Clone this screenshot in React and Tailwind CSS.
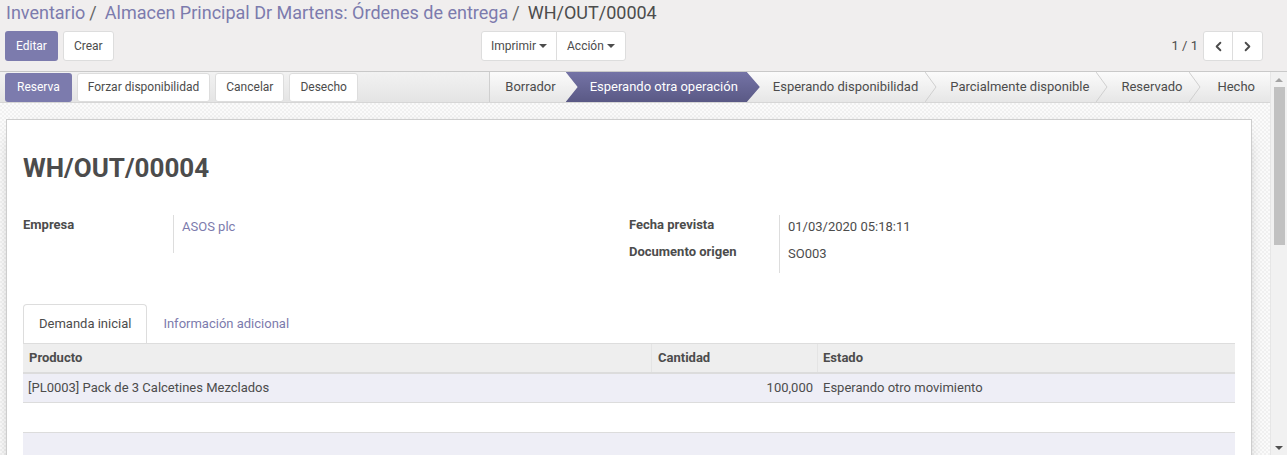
import React from "react";
import { ChevronLeft, ChevronRight } from "lucide-react";

const Caret = () => (
  <span className="inline-block ml-[3px] align-middle border-t-[4px] border-t-[#4c4c4c] border-x-[4px] border-x-transparent" />
);

const Chevron = () => (
  <svg width="12" height="30" viewBox="0 0 12 30" className="shrink-0">
    <polyline points="0,0 11,15 0,30" fill="none" stroke="#cfcfcf" strokeWidth="1" />
  </svg>
);

const steps = [
  "Esperando disponibilidad",
  "Parcialmente disponible",
  "Reservado",
];

const StatusBar = () => (
  <div className="flex h-full border-l border-[#cfcfcf] bg-[linear-gradient(to_bottom,#fbfbfb,#e6e6e6)]">
    <div className="flex items-center pl-[15px] pr-[10px]">Borrador</div>
    <div className="flex items-center pl-[24px] pr-[22px] text-white bg-[linear-gradient(to_bottom,#7473a6,#5a5985)] [clip-path:polygon(0_0,calc(100%_-_13px)_0,100%_50%,calc(100%_-_13px)_100%,0_100%,12px_50%)]">
      Esperando otra operación
    </div>
    {steps.map((s) => (
      <React.Fragment key={s}>
        <div className="flex items-center pl-[13px] pr-[7px]">{s}</div>
        <Chevron />
      </React.Fragment>
    ))}
    <div className="flex items-center pl-[16px] pr-[15px]">Hecho</div>
  </div>
);

export default function App() {
  return (
    <div className="w-[1287px] h-[455px] overflow-hidden flex flex-col text-[13px] text-[#4c4c4c] font-['Roboto',sans-serif] bg-[#f0eeee]">
      {/* control panel */}
      <div className="h-[72px] shrink-0 border-b border-[#c9c9c9] bg-[#f0eeee]">
        <div className="pl-[6px] pt-[1px] text-[18px] leading-[24px]">
          <span className="text-[#7c7bad]">Inventario</span>
          <span className="text-[#666] pl-[4px] pr-[8px]">/</span>
          <span className="text-[#7c7bad]">Almacen Principal Dr Martens: Órdenes de entrega</span>
          <span className="text-[#666] pl-[4px] pr-[8px]">/</span>
          <span>WH/OUT/00004</span>
        </div>
        <div className="flex items-center mt-[6px] h-[30px] text-[12px]">
          <div className="flex gap-[5px] pl-[5px] w-[481px]">
            <button className="h-[30px] px-[11px] rounded-[3px] bg-[#7c7bad] text-white">Editar</button>
            <button className="h-[30px] px-[10px] rounded-[3px] bg-white border border-[#ddd]">Crear</button>
          </div>
          <div className="flex h-[30px] bg-white border border-[#ddd] rounded-[3px]">
            <button className="px-[9px] border-r border-[#ddd] flex items-center">Imprimir<Caret /></button>
            <button className="px-[10px] flex items-center">Acción<Caret /></button>
          </div>
          <div className="ml-auto flex items-center pr-[24px] text-[13px]">
            <span className="mr-[5px]">1 / 1</span>
            <div className="flex h-[30px] bg-white border border-[#ddd] rounded-[3px]">
              <button className="w-[29px] flex items-center justify-center border-r border-[#ddd]">
                <ChevronLeft size={15} strokeWidth={3} />
              </button>
              <button className="w-[29px] flex items-center justify-center">
                <ChevronRight size={15} strokeWidth={3} />
              </button>
            </div>
          </div>
        </div>
      </div>

      <div className="flex flex-1 min-h-0">
        <div className="flex-1 flex flex-col min-w-0">
          {/* status bar */}
          <div className="h-[31px] shrink-0 flex justify-between border-b border-[#d6d6d6] bg-[linear-gradient(to_bottom,#f2f2f2,#e4e4e4)]">
            <div className="flex items-center gap-[5px] pl-[5px] text-[12px]">
              <button className="h-[29px] px-[12px] rounded-[3px] bg-[#7c7bad] text-white">Reserva</button>
              <button className="h-[29px] px-[10px] rounded-[3px] bg-white border border-[#ddd]">Forzar disponibilidad</button>
              <button className="h-[29px] px-[10px] rounded-[3px] bg-white border border-[#ddd]">Cancelar</button>
              <button className="h-[29px] px-[10px] rounded-[3px] bg-white border border-[#ddd]">Desecho</button>
            </div>
            <StatusBar />
          </div>

          {/* sheet area */}
          <div className="flex-1 min-h-0 pt-[16px] pl-[6px] pr-[18px] bg-[#f7f7f7] bg-[repeating-conic-gradient(#f1f1f1_0%_25%,#fbfbfb_0%_50%)] bg-size-[4px_4px]">
            <div className="h-[400px] bg-white border border-[#cdcdcd] shadow-[0_5px_20px_-15px_black] px-[16px] pt-[32px]">
              <h1 className="text-[26px] leading-[32px] font-bold text-[#4c4c4c]">WH/OUT/00004</h1>

              <div className="flex mt-[31px]">
                <div className="w-1/2 flex">
                  <div className="w-[150px] font-bold">Empresa</div>
                  <div className="border-l border-[#ddd] pl-[8px] pt-[2px] h-[38px] text-[#7c7bad]">ASOS plc</div>
                </div>
                <div className="w-1/2 flex">
                  <div className="w-[150px] font-bold">
                    <div className="h-[27px]">Fecha prevista</div>
                    <div className="h-[27px]">Documento origen</div>
                  </div>
                  <div className="border-l border-[#ddd] pl-[8px] pt-[2px] h-[58px]">
                    <div className="h-[27px]">01/03/2020 05:18:11</div>
                    <div className="h-[27px]">SO003</div>
                  </div>
                </div>
              </div>

              {/* tabs */}
              <div className="flex mt-[31px] h-[39px]">
                <div className="px-[15px] flex items-center border border-b-0 border-[#ddd] rounded-t-[4px] bg-white">Demanda inicial</div>
                <div className="px-[16px] flex items-center text-[#7c7bad]">Información adicional</div>
              </div>

              {/* table */}
              <div className="border-t border-[#ddd]">
                <div className="flex h-[30px] bg-[#eeeeee] border-b-2 border-[#dcdcdc] font-bold">
                  <div className="w-[629px] px-[6px] flex items-center border-r border-[#e4e4e4]">Producto</div>
                  <div className="w-[166px] px-[6px] flex items-center border-r border-[#e4e4e4]">Cantidad</div>
                  <div className="flex-1 px-[5px] flex items-center">Estado</div>
                </div>
                <div className="flex h-[29px] bg-[#eeeef6] border-b border-[#dcdcdc]">
                  <div className="w-[629px] px-[5px] flex items-center">[PL0003] Pack de 3 Calcetines Mezclados</div>
                  <div className="w-[166px] px-[5px] flex items-center justify-end">100,000</div>
                  <div className="flex-1 px-[5px] flex items-center">Esperando otro movimiento</div>
                </div>
                <div className="h-[30px] bg-white border-b border-[#dcdcdc]" />
                <div className="h-[40px] bg-[#eeeef6]" />
              </div>
            </div>
          </div>
        </div>

        {/* scrollbar */}
        <div className="w-[17px] shrink-0 flex flex-col items-center bg-[#f1f1f1] border-l border-[#e6e6e6]">
          <div className="h-[15px] flex items-center justify-center">
            <span className="border-b-[4px] border-b-[#a3a3a3] border-x-[4px] border-x-transparent" />
          </div>
          <div className="w-[11px] h-[158px] bg-[#c1c1c1]" />
          <div className="flex-1" />
          <div className="h-[14px] flex items-center justify-center">
            <span className="border-t-[4px] border-t-[#505050] border-x-[4px] border-x-transparent" />
          </div>
        </div>
      </div>
    </div>
  );
}
